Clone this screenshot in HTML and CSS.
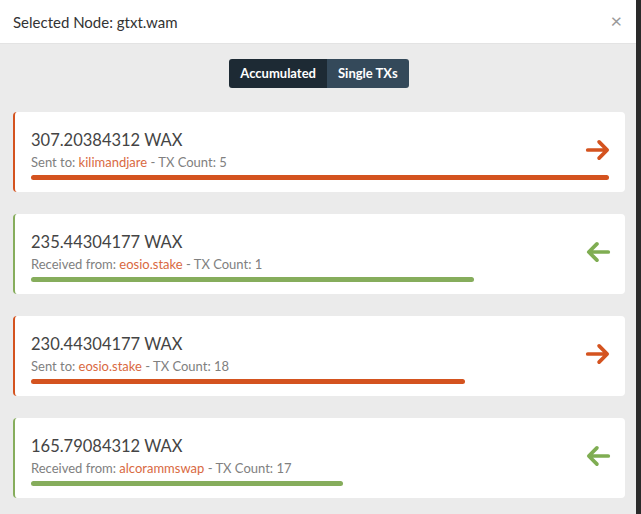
FILE: index.html
```html
<!DOCTYPE html>
<html>
	<head>
		<meta charset="UTF-8">
		<title>Selected Node</title>
		<link rel="stylesheet" href="styles.css">
	</head>
	<body>
		<section class="modal">
			<header class="modal-head">
				<span class="modal-title">Selected Node: gtxt.wam</span>
				<a href="javascript:;" class="close">&times;</a>
			</header>
			<div class="modal-body">
				<nav class="toggle">
					<a href="javascript:;" class="active">Accumulated</a>
					<a href="javascript:;">Single TXs</a>
				</nav>
				<ul class="tx-list">
					<li class="tx out">
						<div class="tx-row">
							<div class="tx-info">
								<div class="amount">307.20384312 WAX</div>
								<div class="meta">Sent to: <a href="javascript:;">kilimandjare</a> - TX Count: 5</div>
							</div>
							<svg class="dir" viewBox="0 0 24 24"><path d="M2.5 12H20M13 4.5L20.5 12L13 19.5"/></svg>
						</div>
						<div class="bar" style="width: 100%"></div>
					</li>
					<li class="tx in">
						<div class="tx-row">
							<div class="tx-info">
								<div class="amount">235.44304177 WAX</div>
								<div class="meta">Received from: <a href="javascript:;">eosio.stake</a> - TX Count: 1</div>
							</div>
							<svg class="dir" viewBox="0 0 24 24"><path d="M21.5 12H4M11 4.5L3.5 12L11 19.5"/></svg>
						</div>
						<div class="bar" style="width: 76.6%"></div>
					</li>
					<li class="tx out">
						<div class="tx-row">
							<div class="tx-info">
								<div class="amount">230.44304177 WAX</div>
								<div class="meta">Sent to: <a href="javascript:;">eosio.stake</a> - TX Count: 18</div>
							</div>
							<svg class="dir" viewBox="0 0 24 24"><path d="M2.5 12H20M13 4.5L20.5 12L13 19.5"/></svg>
						</div>
						<div class="bar" style="width: 75%"></div>
					</li>
					<li class="tx in">
						<div class="tx-row">
							<div class="tx-info">
								<div class="amount">165.79084312 WAX</div>
								<div class="meta">Received from: <a href="javascript:;">alcorammswap</a> - TX Count: 17</div>
							</div>
							<svg class="dir" viewBox="0 0 24 24"><path d="M21.5 12H4M11 4.5L3.5 12L11 19.5"/></svg>
						</div>
						<div class="bar" style="width: 54%"></div>
					</li>
				</ul>
			</div>
		</section>
	</body>
</html>
```

FILE: styles.css
```css
body{
	margin: 0;
	background: #2a2a2a;
	font-family: Lato, "Liberation Sans", sans-serif;
}
.modal{
	width: 636px;
	height: 514px;
	background: #ebebeb;
	overflow: hidden;
}
.modal-head{
	height: 44px;
	box-sizing: border-box;
	background: #fff;
	border-bottom: 1px solid #e3e3e3;
	display: flex;
	align-items: center;
	justify-content: space-between;
	padding: 0 14px 0 13px;
}
.modal-title{
	font-size: 15px;
	color: #333;
}
.close{
	color: #999;
	font-size: 20px;
	text-decoration: none;
	line-height: 1;
	margin-top: -4px;
}
.modal-body{
	padding: 15px 11px 0 13px;
}
.toggle{
	display: flex;
	justify-content: center;
	margin-bottom: 24px;
}
.toggle a{
	display: block;
	height: 29px;
	line-height: 29px;
	padding: 0 11px;
	font-size: 13px;
	font-weight: bold;
	color: #fff;
	text-decoration: none;
	background: #34495a;
}
.toggle a:first-child{
	border-radius: 3px 0 0 3px;
}
.toggle a:last-child{
	border-radius: 0 3px 3px 0;
}
.toggle a.active{
	background: #1d2a34;
}
.tx-list{
	margin: 0;
	padding: 0;
	list-style: none;
}
.tx{
	background: #fff;
	border-left: 2px solid;
	border-radius: 4px;
	padding: 18px 16px 11px;
	margin-bottom: 22px;
	height: 80px;
	box-sizing: border-box;
}
.tx.out{
	border-color: #d4531f;
	color: #d4531f;
}
.tx.in{
	border-color: #86ad5c;
	color: #7fad52;
}
.tx-row{
	display: flex;
	align-items: center;
	justify-content: space-between;
}
.amount{
	font-size: 16.5px;
	color: #444;
	line-height: 20px;
}
.meta{
	font-size: 13px;
	color: #808080;
	line-height: 16px;
	margin-top: 4px;
}
.meta a{
	color: #d9693f;
	text-decoration: none;
}
.dir{
	width: 26px;
	height: 26px;
	fill: none;
	stroke: currentColor;
	stroke-width: 3.4;
	stroke-linecap: round;
	stroke-linejoin: round;
	margin-right: -2px;
}
.bar{
	height: 5px;
	border-radius: 3px;
	background: currentColor;
	margin-top: 5px;
}
.tx.in .bar{
	background: #86ad5c;
}
```
